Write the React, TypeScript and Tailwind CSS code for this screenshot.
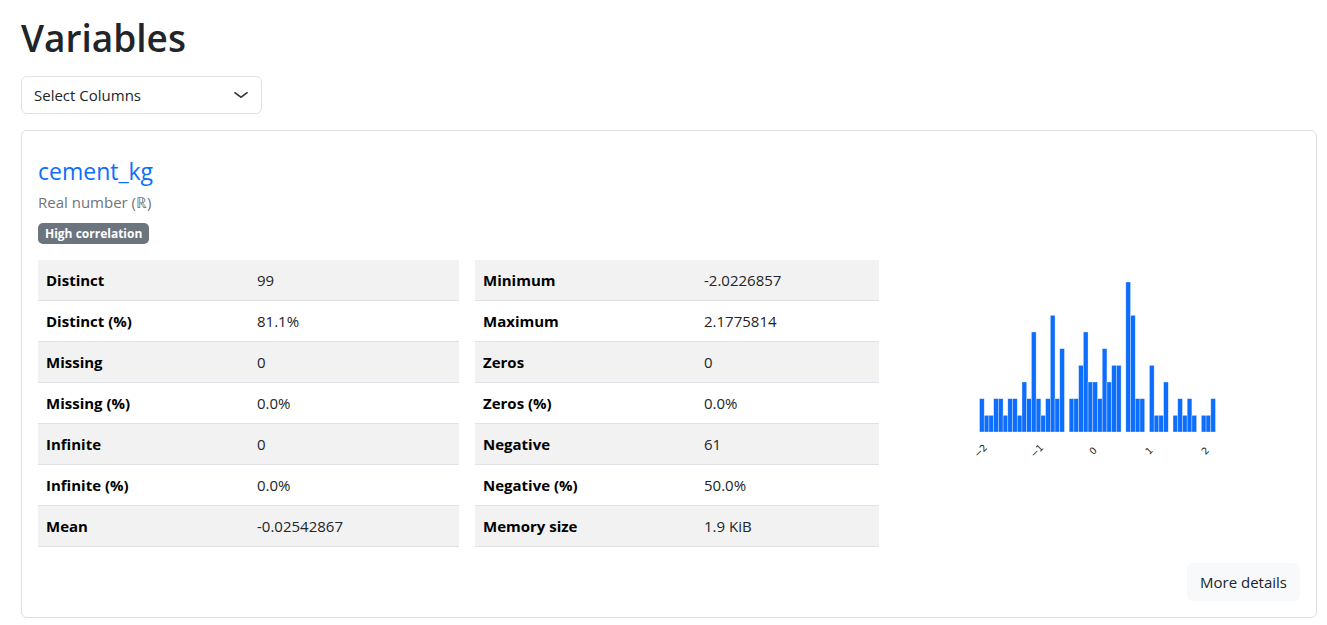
const leftRows = [
  ["Distinct", "99"],
  ["Distinct (%)", "81.1%"],
  ["Missing", "0"],
  ["Missing (%)", "0.0%"],
  ["Infinite", "0"],
  ["Infinite (%)", "0.0%"],
  ["Mean", "-0.02542867"],
];

const rightRows = [
  ["Minimum", "-2.0226857"],
  ["Maximum", "2.1775814"],
  ["Zeros", "0"],
  ["Zeros (%)", "0.0%"],
  ["Negative", "61"],
  ["Negative (%)", "50.0%"],
  ["Memory size", "1.9 KiB"],
];

// bin counts read off the histogram, 50 bins from min to max
const bins = [
  2, 1, 1, 2, 2, 1, 2, 2, 1, 3, 2, 6, 2, 1, 2, 7, 2, 5, 0, 2, 2, 4, 6, 3, 3,
  2, 5, 3, 4, 4, 0, 9, 7, 2, 2, 0, 4, 1, 1, 3, 0, 1, 2, 1, 2, 1, 0, 1, 1, 2,
];

const StatsTable = ({ rows, labelWidth }: { rows: string[][]; labelWidth: string }) => {
  return (
    <div className="flex flex-col">
      {rows.map((row, i) => (
        <div
          key={row[0]}
          className={`grid ${labelWidth} h-[41px] border-b border-[#dee2e6] ${
            i % 2 === 0 ? "bg-[#f2f2f2]" : "bg-white"
          }`}
        >
          <div className="px-2 py-2 font-bold text-black leading-6">{row[0]}</div>
          <div className="px-2 py-2 text-[#212529] leading-6">{row[1]}</div>
        </div>
      ))}
    </div>
  );
};

const Histogram = () => {
  const x0 = 11.5;
  const bw = 236 / bins.length;
  const base = 162;
  const unit = 16.67;
  const min = -2.0226857;
  const max = 2.1775814;
  const ticks = [-2, -1, 0, 1, 2];
  return (
    <svg width="260" height="200" viewBox="0 0 260 200">
      {bins.map((b, i) =>
        b > 0 ? (
          <rect
            key={i}
            x={x0 + i * bw}
            y={base - b * unit}
            width={bw}
            height={b * unit}
            fill="#0d6efd"
            stroke="#ffffff"
            strokeOpacity={0.55}
            strokeWidth={0.6}
          />
        ) : null
      )}
      {ticks.map((t) => {
        const tx = x0 + ((t - min) / (max - min)) * 236;
        return (
          <text
            key={t}
            x={tx}
            y={184}
            fontSize="9.5"
            fill="#222"
            textAnchor="middle"
            fontFamily="DejaVu Sans, sans-serif"
            transform={`rotate(-45 ${tx} 181)`}
          >
            {t < 0 ? `\u2212${Math.abs(t)}` : t}
          </text>
        );
      })}
    </svg>
  );
};

export default function App() {
  return (
    <div className="min-h-[625px] bg-white pl-[21px] font-['Open_Sans',sans-serif] text-[15px] text-[#212529]">
      <h1 className="mt-[14px] mb-[14px] text-[37px] leading-[48px] font-semibold text-[#212529]">
        Variables
      </h1>

      <div className="flex h-[38px] w-[241px] items-center justify-between rounded-md border border-[#dee2e6] pl-3 pr-3">
        <span className="text-[#212529]">Select Columns</span>
        <svg width="16" height="12" viewBox="0 0 16 16" preserveAspectRatio="none">
          <path
            d="m2 5 6 6 6-6"
            fill="none"
            stroke="#343a40"
            strokeWidth="2"
            strokeLinecap="round"
            strokeLinejoin="round"
          />
        </svg>
      </div>

      <div className="mt-4 w-[1296px] rounded-md border border-[#dfdfdf] p-4">
        {/* Header */}
        <div className="mt-[10px]">
          <div className="text-[23px] leading-[28px] font-medium text-[#0d6efd]">cement_kg</div>
          <div className="mt-[6px] leading-[22px] font-medium text-[#6c757d]">Real number (ℝ)</div>
          <span className="mt-[10px] inline-block rounded-[5px] bg-[#6c757d] px-[7px] text-[12px] leading-[21px] font-bold text-white">
            High correlation
          </span>
        </div>

        {/* Stats */}
        <div className="mt-4 grid grid-cols-[421px_404px_1fr] gap-4">
          <StatsTable rows={leftRows} labelWidth="grid-cols-[211px_1fr]" />
          <StatsTable rows={rightRows} labelWidth="grid-cols-[221px_1fr]" />
          <div className="flex justify-center pt-[10px]">
            <Histogram />
          </div>
        </div>

        <div className="mt-4 flex justify-end">
          <button className="h-[38px] rounded-md bg-[#f8f9fa] px-[13px] text-[15px] text-[#212529]">
            More details
          </button>
        </div>
      </div>
    </div>
  );
}
